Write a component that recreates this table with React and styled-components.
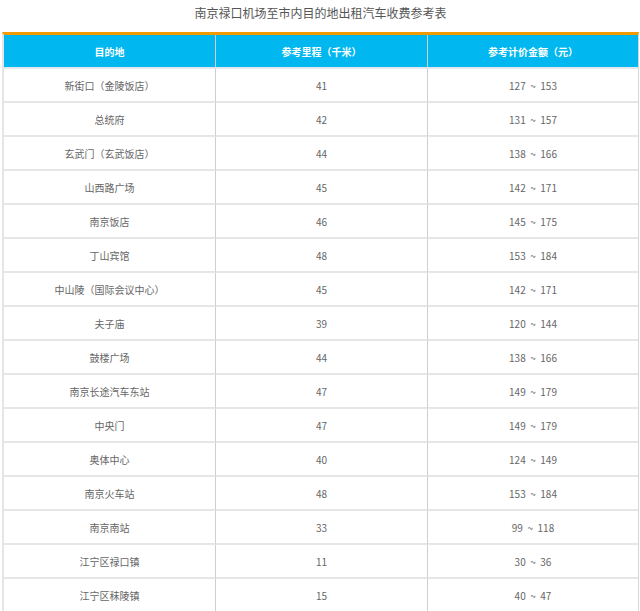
import React from "react";
import styled, { createGlobalStyle } from "styled-components";

const Global = createGlobalStyle`
  html, body { margin: 0; padding: 0; background: #fff; }
  body { font-family: "Noto Sans CJK SC", "Noto Sans", sans-serif; }
`;

const Page = styled.div`
  padding: 0 1px 0 2px;
`;

const Title = styled.div`
  height: 32px;
  line-height: 26px;
  text-align: center;
  font-size: 12px;
  color: #555;
`;

const Table = styled.table`
  width: 637px;
  border-collapse: separate;
  border-spacing: 0;
  border-top: 3px solid #f39a00;
  border-left: 2px solid #e6e6e6;
  border-right: 1px solid #d8d8d8;
  table-layout: fixed;
`;

const Th = styled.th`
  height: 32px;
  padding: 0;
  background: #00b8ef;
  color: #fff;
  font-size: 10px;
  font-weight: bold;
  border-bottom: 2px solid #e2e8ec;
  border-right: ${(p) => (p.$last ? "none" : "1px solid #cfcfcf")};
`;

const Td = styled.td`
  height: 32px;
  padding: 0;
  text-align: center;
  font-size: 10px;
  color: #666;
  word-spacing: ${(p) => (p.$num ? "2.3px" : "0")};
  border-bottom: 2px solid #e6e6e6;
  border-right: ${(p) => (p.$last ? "none" : "1px solid #cfcfcf")};
`;

const rows = [
  ["新街口（金陵饭店）", "41", "127 ~ 153"],
  ["总统府", "42", "131 ~ 157"],
  ["玄武门（玄武饭店）", "44", "138 ~ 166"],
  ["山西路广场", "45", "142 ~ 171"],
  ["南京饭店", "46", "145 ~ 175"],
  ["丁山宾馆", "48", "153 ~ 184"],
  ["中山陵（国际会议中心）", "45", "142 ~ 171"],
  ["夫子庙", "39", "120 ~ 144"],
  ["鼓楼广场", "44", "138 ~ 166"],
  ["南京长途汽车东站", "47", "149 ~ 179"],
  ["中央门", "47", "149 ~ 179"],
  ["奥体中心", "40", "124 ~ 149"],
  ["南京火车站", "48", "153 ~ 184"],
  ["南京南站", "33", "99 ~ 118"],
  ["江宁区禄口镇", "11", "30 ~ 36"],
  ["江宁区秣陵镇", "15", "40 ~ 47"],
];

export default function App() {
  return (
    <>
      <Global />
      <Page>
        <Title>南京禄口机场至市内目的地出租汽车收费参考表</Title>
        <Table>
          <colgroup>
            <col style={{ width: "212px" }} />
            <col style={{ width: "212px" }} />
            <col />
          </colgroup>
          <thead>
            <tr>
              <Th>目的地</Th>
              <Th>参考里程（千米）</Th>
              <Th $last>参考计价金额（元）</Th>
            </tr>
          </thead>
          <tbody>
            {rows.map((r) => (
              <tr key={r[0]}>
                <Td>{r[0]}</Td>
                <Td $num>{r[1]}</Td>
                <Td $num $last>{r[2]}</Td>
              </tr>
            ))}
          </tbody>
        </Table>
      </Page>
    </>
  );
}
